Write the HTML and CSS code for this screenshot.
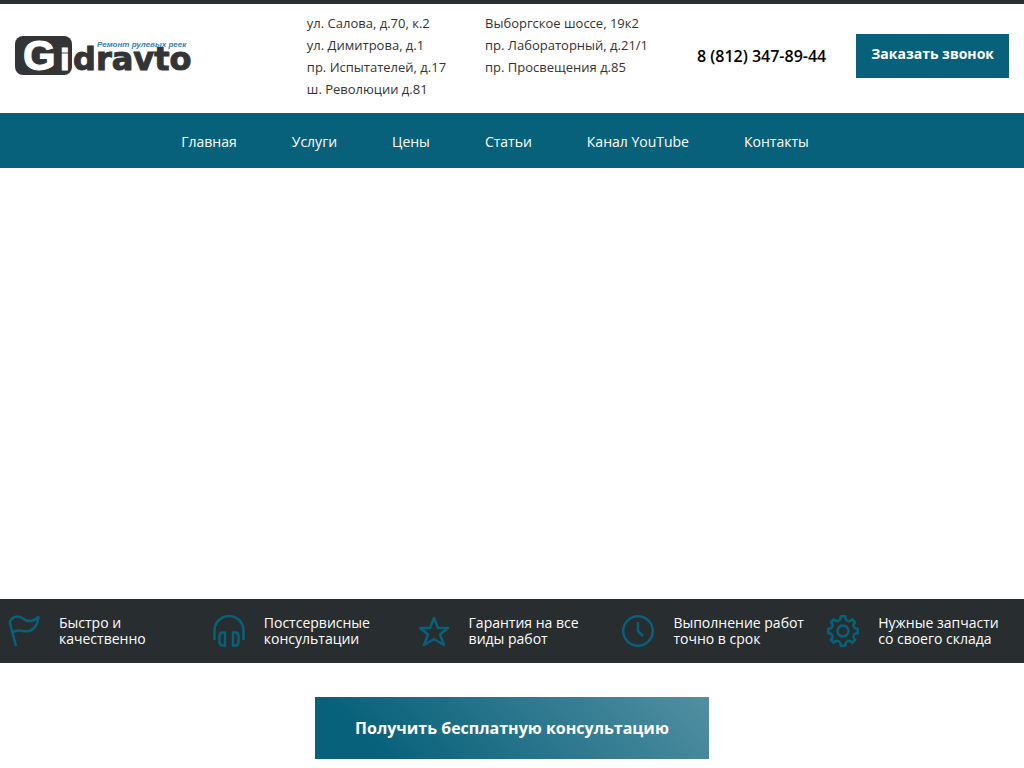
FILE: index.html
```html
<!DOCTYPE html>
<html lang="ru">
<head>
<meta charset="utf-8">
<meta name="viewport" content="width=device-width, initial-scale=1">
<title>Gidravto</title>
<link rel="stylesheet" href="styles.css">
</head>
<body>
<header class="header">
  <a class="logo" href="#" aria-label="Gidravto">
    <svg width="180" height="42" viewBox="0 0 180 42">
      <rect x="0" y="1" width="57" height="39" rx="8" fill="#333436"/>
      <text class="logo-g" x="8" y="35">G</text>
      <text class="logo-i" x="45" y="35">i</text>
      <text class="logo-rest" x="58" y="35">dravto</text>
      <text class="logo-tag" x="82" y="12">Ремонт рулевых реек</text>
    </svg>
  </a>
  <address class="addresses">
    <ul class="address-list">
      <li>ул. Салова, д.70, к.2</li>
      <li>ул. Димитрова, д.1</li>
      <li>пр. Испытателей, д.17</li>
      <li>ш. Революции д.81</li>
    </ul>
    <ul class="address-list">
      <li>Выборгское шоссе, 19к2</li>
      <li>пр. Лабораторный, д.21/1</li>
      <li>пр. Просвещения д.85</li>
    </ul>
  </address>
  <div class="contact">
    <a class="phone" href="tel:88123478944">8 (812) 347-89-44</a>
    <button class="call" type="button">Заказать звонок</button>
  </div>
</header>
<nav class="nav">
  <a href="#">Главная</a>
  <a href="#">Услуги</a>
  <a href="#">Цены</a>
  <a href="#">Статьи</a>
  <a href="#">Канал YouTube</a>
  <a href="#">Контакты</a>
</nav>
<main>
  <section class="hero"></section>
  <ul class="features">
    <li class="feature">
      <svg class="icon" viewBox="0 0 32 32"><path d="M8 31 1.800 7.500C3 2 9 0 14 3c5 4 11 4 16.500-1C30 9 26 15 21 16c-5 1.500-11-3-16.500 1.500"/></svg>
      <span>Быстро и качественно</span>
    </li>
    <li class="feature">
      <svg class="icon" viewBox="0 0 32 32"><path d="M1.500 25V15.500a14.500 14.500 0 0 1 29 0V25M12 17.500v13H9.500c-2 0-3-2-3-4v-5c0-2 1-4 3-4zM20 17.500v13h2.500c2 0 3-2 3-4v-5c0-2-1-4-3-4z"/></svg>
      <span>Постсервисные консультации</span>
    </li>
    <li class="feature">
      <svg class="icon" viewBox="0 0 32 32"><path d="m16 3 4 10h10l-8 6.500 4 10.500-10-6-10 6 4-10.500L2 13h10z"/></svg>
      <span>Гарантия на все виды работ</span>
    </li>
    <li class="feature">
      <svg class="icon" viewBox="0 0 32 32"><circle cx="16" cy="16" r="14.800"/><path d="M16 7v9l5 5"/></svg>
      <span>Выполнение работ точно в срок</span>
    </li>
    <li class="feature">
      <svg class="icon" viewBox="0 0 32 32"><circle cx="16" cy="16" r="5.500"/><path d="M13.800 1.300h4.400c0 3 1 4.200 2.600 4.600 1.700.6 3.200 0 4.400-1.700l3 3c-1.700 1.400-2.200 2.800-1.500 4.400.6 1.500 1.800 2.200 4 2.200v4.400c-2.200 0-3.400.7-4 2.200-.7 1.600-.2 3 1.500 4.400l-3 3c-1.200-1.700-2.700-2.300-4.400-1.700-1.600.4-2.600 1.600-2.600 4.600h-4.400c0-3-1-4.200-2.600-4.600-1.700-.6-3.200 0-4.400 1.700l-3-3c1.700-1.400 2.200-2.800 1.500-4.400-.6-1.500-1.800-2.200-4-2.200v-4.400c2.200 0 3.400-.7 4-2.200.7-1.600.2-3-1.500-4.400l3-3c1.200 1.700 2.700 2.300 4.400 1.700 1.600-.4 2.600-1.600 2.600-4.600z"/></svg>
      <span>Нужные запчасти со своего склада</span>
    </li>
  </ul>
  <div class="cta">
    <button class="cta-button" type="button">Получить бесплатную консультацию</button>
  </div>
</main>
</body>
</html>
```
FILE: styles.css
```css
* {
  box-sizing: border-box;
}

body {
  margin: 0;
  background: #fff;
  color: #000;
  font-family: "Open Sans", sans-serif;
  font-size: 14px;
}

ul {
  margin: 0;
  padding: 0;
  list-style: none;
}

a {
  color: inherit;
  text-decoration: none;
}

button {
  border: 0;
  color: #fff;
  font-family: inherit;
  font-weight: 700;
  cursor: pointer;
}

.header {
  display: flex;
  justify-content: space-between;
  padding: 8px 15px 13px;
  border-top: 4px solid #282d30;
}

.logo {
  width: 180px;
  padding-top: 23px;
}

.logo svg {
  display: block;
  overflow: visible;
}

.logo text {
  font-family: "DejaVu Sans", sans-serif;
  font-weight: 700;
}

.logo .logo-g {
  fill: #fff;
  stroke: #fff;
  font-family: "Liberation Sans", sans-serif;
  font-size: 42px;
}

.logo .logo-i {
  fill: #fff;
  stroke: #fff;
  font-size: 28px;
}

.logo .logo-rest {
  fill: #333436;
  stroke: #333436;
  font-size: 32px;
}

.logo .logo-tag {
  fill: #2f7fbd;
  font-family: "Liberation Sans", sans-serif;
  font-size: 8px;
  font-style: italic;
}

.addresses {
  display: flex;
  gap: 39px;
  margin-left: 63px;
  color: #333;
  font-size: 13px;
  font-style: normal;
  line-height: 22px;
}

.contact {
  display: flex;
  align-items: flex-start;
  gap: 30px;
  padding-top: 22px;
}

.phone {
  font-size: 16px;
  font-weight: 600;
  line-height: 44px;
}

.call {
  height: 44px;
  padding: 0 15px 5px;
  background: #07617a;
  font-size: 14px;
}

.nav {
  display: flex;
  justify-content: center;
  gap: 55px;
  padding: 19px 34px 17px 0;
  background: #07617a;
  color: #fff;
  line-height: 19px;
}

.hero {
  min-height: 431px;
}

.features {
  display: grid;
  grid-template-columns: repeat(5, 1fr);
  padding: 16px 0;
  background: #282d30;
  color: #fff;
  line-height: 16px;
}

.feature {
  display: flex;
  align-items: center;
  gap: 19px;
  padding: 0 15px 0 8px;
}

.feature span {
  flex: 1;
}

.icon {
  width: 32px;
  height: 32px;
  flex: none;
  fill: none;
  stroke: #07617a;
  stroke-width: 2.5;
  stroke-linejoin: round;
}

.cta {
  padding: 34px 15px 9px;
  text-align: center;
}

.cta-button {
  padding: 20px 40px;
  background: linear-gradient(45deg, #07617a 15%, #528fa2);
  font-size: 16px;
  line-height: 22px;
}
```
